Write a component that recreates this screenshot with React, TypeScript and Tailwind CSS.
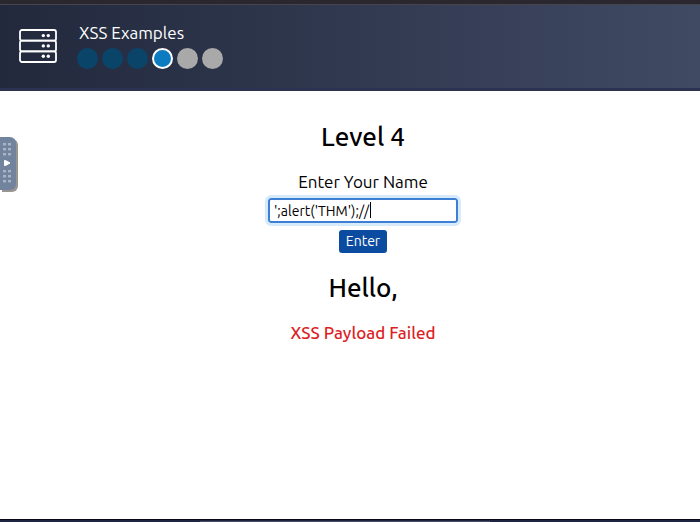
import { useState } from "react";

const steps = ["done", "done", "done", "current", "todo", "todo"];

const stepStyles: Record<string, string> = {
  done: "bg-[#0a4468]",
  current: "bg-[#0d7bc0] border-2 border-white",
  todo: "bg-[#a9a9a9]",
};

function ServerIcon() {
  return (
    <svg
      width="38"
      height="34"
      viewBox="0 0 38 34"
      fill="none"
      stroke="white"
      strokeWidth="1.8"
      className="shrink-0"
    >
      <rect x="1" y="1" width="36" height="10.7" rx="2" />
      <rect x="1" y="11.7" width="36" height="10.7" rx="2" />
      <rect x="1" y="22.4" width="36" height="10.6" rx="2" />
      <g fill="white" stroke="none">
        <circle cx="24.3" cy="6.6" r="1.7" />
        <circle cx="29.3" cy="6.6" r="1.7" />
        <circle cx="24.3" cy="16.9" r="1.7" />
        <circle cx="29.3" cy="16.9" r="1.7" />
        <circle cx="24.3" cy="27.2" r="1.7" />
        <circle cx="29.3" cy="27.2" r="1.7" />
      </g>
    </svg>
  );
}

function SideHandle() {
  const rows = [7, 12, 17, 34, 39, 44];

  return (
    <button
      type="button"
      aria-label="Open panel"
      className="absolute left-0 top-[137px] h-[53px] w-4 rounded-r-md bg-[#72839d] shadow-[2px_2px_0_#999692]"
    >
      <svg width="16" height="53" viewBox="0 0 16 53">
        {rows.map((y) => (
          <g key={y} fill="#a9b4c5">
            <rect x="3" y={y - 1} width="3" height="2.4" />
            <rect x="8" y={y - 1} width="3" height="2.4" />
          </g>
        ))}
        <path
          d="M4.500 23.500h1L10 26l-4.500 2.500h-1z"
          fill="white"
          stroke="white"
          strokeLinejoin="round"
        />
      </svg>
    </button>
  );
}

export default function App() {
  const [name, setName] = useState("';alert('THM');//");

  return (
    <div className="relative flex min-h-screen flex-col bg-white font-['Ubuntu','Noto_Sans',sans-serif] text-black">
      <div className="h-[5px] border-b border-[#46454e] bg-[#2b272e]" />
      <header className="flex h-[86px] items-center gap-5 border-b-3 border-[#2b3350] bg-linear-to-r from-[#22293d] to-[#404a63] px-[19px] pb-px">
        <ServerIcon />
        <div className="flex flex-col gap-[5px]">
          <h1 className="px-[2px] text-[17px] leading-5 text-white">
            XSS Examples
          </h1>
          <div className="flex gap-1">
            {steps.map((step, i) => (
              <span
                key={i}
                className={`size-[21px] rounded-full ${stepStyles[step]}`}
              />
            ))}
          </div>
        </div>
      </header>

      <main className="flex flex-1 flex-col items-center pt-7 pl-[26px]">
        <h2 className="text-[26px] leading-9 font-medium">Level 4</h2>
        <form
          className="mt-[15px] flex flex-col items-center"
          onSubmit={(e) => e.preventDefault()}
        >
          <label htmlFor="name" className="text-[17px] leading-6">
            Enter Your Name
          </label>
          <div className="relative mt-1">
            <input
              id="name"
              type="text"
              value={name}
              onChange={(e) => setName(e.target.value)}
              className="block h-[25px] w-[190px] rounded-[3px] border-2 border-[#3d7fd3] px-1 text-[14px] outline-3 outline-[#d6eafc]"
            />
            <span className="absolute top-1 left-[102px] h-4 w-px bg-black" />
          </div>
          <button
            type="submit"
            className="mt-[7px] h-[23px] w-12 rounded-[3px] bg-[#0b4ca1] text-[14px] text-white"
          >
            Enter
          </button>
        </form>
        <h2 className="mt-[17px] text-[26px] leading-9 font-medium">Hello,</h2>
        <p className="mt-[15px] text-[17px] leading-6 font-medium text-[#dc1f26]">
          XSS Payload Failed
        </p>
      </main>

      <footer className="flex h-[3px] justify-center border-t border-[#08081a] bg-[#1d2540] pr-[10px]">
        <div className="mt-px w-[290px] bg-[#454c63]" />
      </footer>
      <SideHandle />
    </div>
  );
}
